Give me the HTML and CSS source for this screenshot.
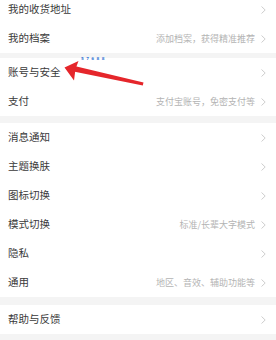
FILE: index.html
```html
<!DOCTYPE html>
<html lang="zh">
<head>
<meta charset="utf-8">
<link rel="stylesheet" href="styles.css">
</head>
<body>
<div class="page">
  <div class="group first">
    <div class="row"><span class="label">我的收货地址</span><svg class="chev" viewBox="0 0 5 8"><polyline points="0.5,0.5 4.2,4 0.5,7.5"/></svg></div>
    <div class="row"><span class="label">我的档案</span><span class="hint">添加档案，获得精准推荐</span><svg class="chev" viewBox="0 0 5 8"><polyline points="0.5,0.5 4.2,4 0.5,7.5"/></svg></div>
  </div>
  <div class="group g2">
    <div class="row"><span class="label">账号与安全</span><svg class="chev" viewBox="0 0 5 8"><polyline points="0.5,0.5 4.2,4 0.5,7.5"/></svg></div>
    <div class="row"><span class="label">支付</span><span class="hint">支付宝账号，免密支付等</span><svg class="chev" viewBox="0 0 5 8"><polyline points="0.5,0.5 4.2,4 0.5,7.5"/></svg></div>
  </div>
  <div class="group g3">
    <div class="row"><span class="label">消息通知</span><svg class="chev" viewBox="0 0 5 8"><polyline points="0.5,0.5 4.2,4 0.5,7.5"/></svg></div>
    <div class="row"><span class="label">主题换肤</span><svg class="chev" viewBox="0 0 5 8"><polyline points="0.5,0.5 4.2,4 0.5,7.5"/></svg></div>
    <div class="row"><span class="label">图标切换</span><svg class="chev" viewBox="0 0 5 8"><polyline points="0.5,0.5 4.2,4 0.5,7.5"/></svg></div>
    <div class="row"><span class="label">模式切换</span><span class="hint">标准/长辈大字模式</span><svg class="chev" viewBox="0 0 5 8"><polyline points="0.5,0.5 4.2,4 0.5,7.5"/></svg></div>
    <div class="row"><span class="label">隐私</span><svg class="chev" viewBox="0 0 5 8"><polyline points="0.5,0.5 4.2,4 0.5,7.5"/></svg></div>
    <div class="row"><span class="label">通用</span><span class="hint">地区、音效、辅助功能等</span><svg class="chev" viewBox="0 0 5 8"><polyline points="0.5,0.5 4.2,4 0.5,7.5"/></svg></div>
  </div>
  <div class="group g4">
    <div class="row"><span class="label">帮助与反馈</span><svg class="chev" viewBox="0 0 5 8"><polyline points="0.5,0.5 4.2,4 0.5,7.5"/></svg></div>
  </div>
</div>
<span class="tiny">5 7 6 8 8</span>
<svg class="arrow" viewBox="0 0 276 340" width="276" height="340">
  <polygon points="74.5,66 143.5,82.6 142.8,85.4 73.5,71.5" fill="#e5262b"/>
  <polygon points="64.5,67.5 78.5,61 75.5,69 74,80.5" fill="#e5262b"/>
</svg>
</body>
</html>
```

FILE: styles.css
```css
html, body {
  margin: 0;
  padding: 0;
  background: #f4f4f4;
}
body {
  width: 276px;
  height: 340px;
  overflow: hidden;
  position: relative;
  font-family: "Noto Sans CJK SC", "Noto Sans", sans-serif;
}
.page {
  display: flex;
  flex-direction: column;
  margin-top: -5px;
}
.group {
  background: #fff;
  display: flex;
  flex-direction: column;
}
.g2 { margin-top: 5px; }
.g3 { margin-top: 7px; }
.g4 { margin-top: 8px; }
.row {
  height: 29px;
  display: flex;
  align-items: center;
  padding: 0 10px 0 8px;
}
.label {
  flex: 1;
  font-size: 10.5px;
  color: #3a3a3a;
  line-height: 1;
}
.hint {
  font-size: 9px;
  color: #b4b4b4;
  line-height: 1;
  margin-right: 6px;
}
.chev {
  width: 5px;
  height: 8px;
  fill: none;
  stroke: #c8c8c8;
  stroke-width: 0.9;
}
.tiny {
  position: absolute;
  left: 81px;
  top: 57px;
  font-size: 4px;
  line-height: 4px;
  color: #3d7bd6;
  letter-spacing: 0.5px;
  font-family: "DejaVu Sans", sans-serif;
  font-weight: bold;
}
.arrow {
  position: absolute;
  left: 0;
  top: 0;
  pointer-events: none;
}
```
